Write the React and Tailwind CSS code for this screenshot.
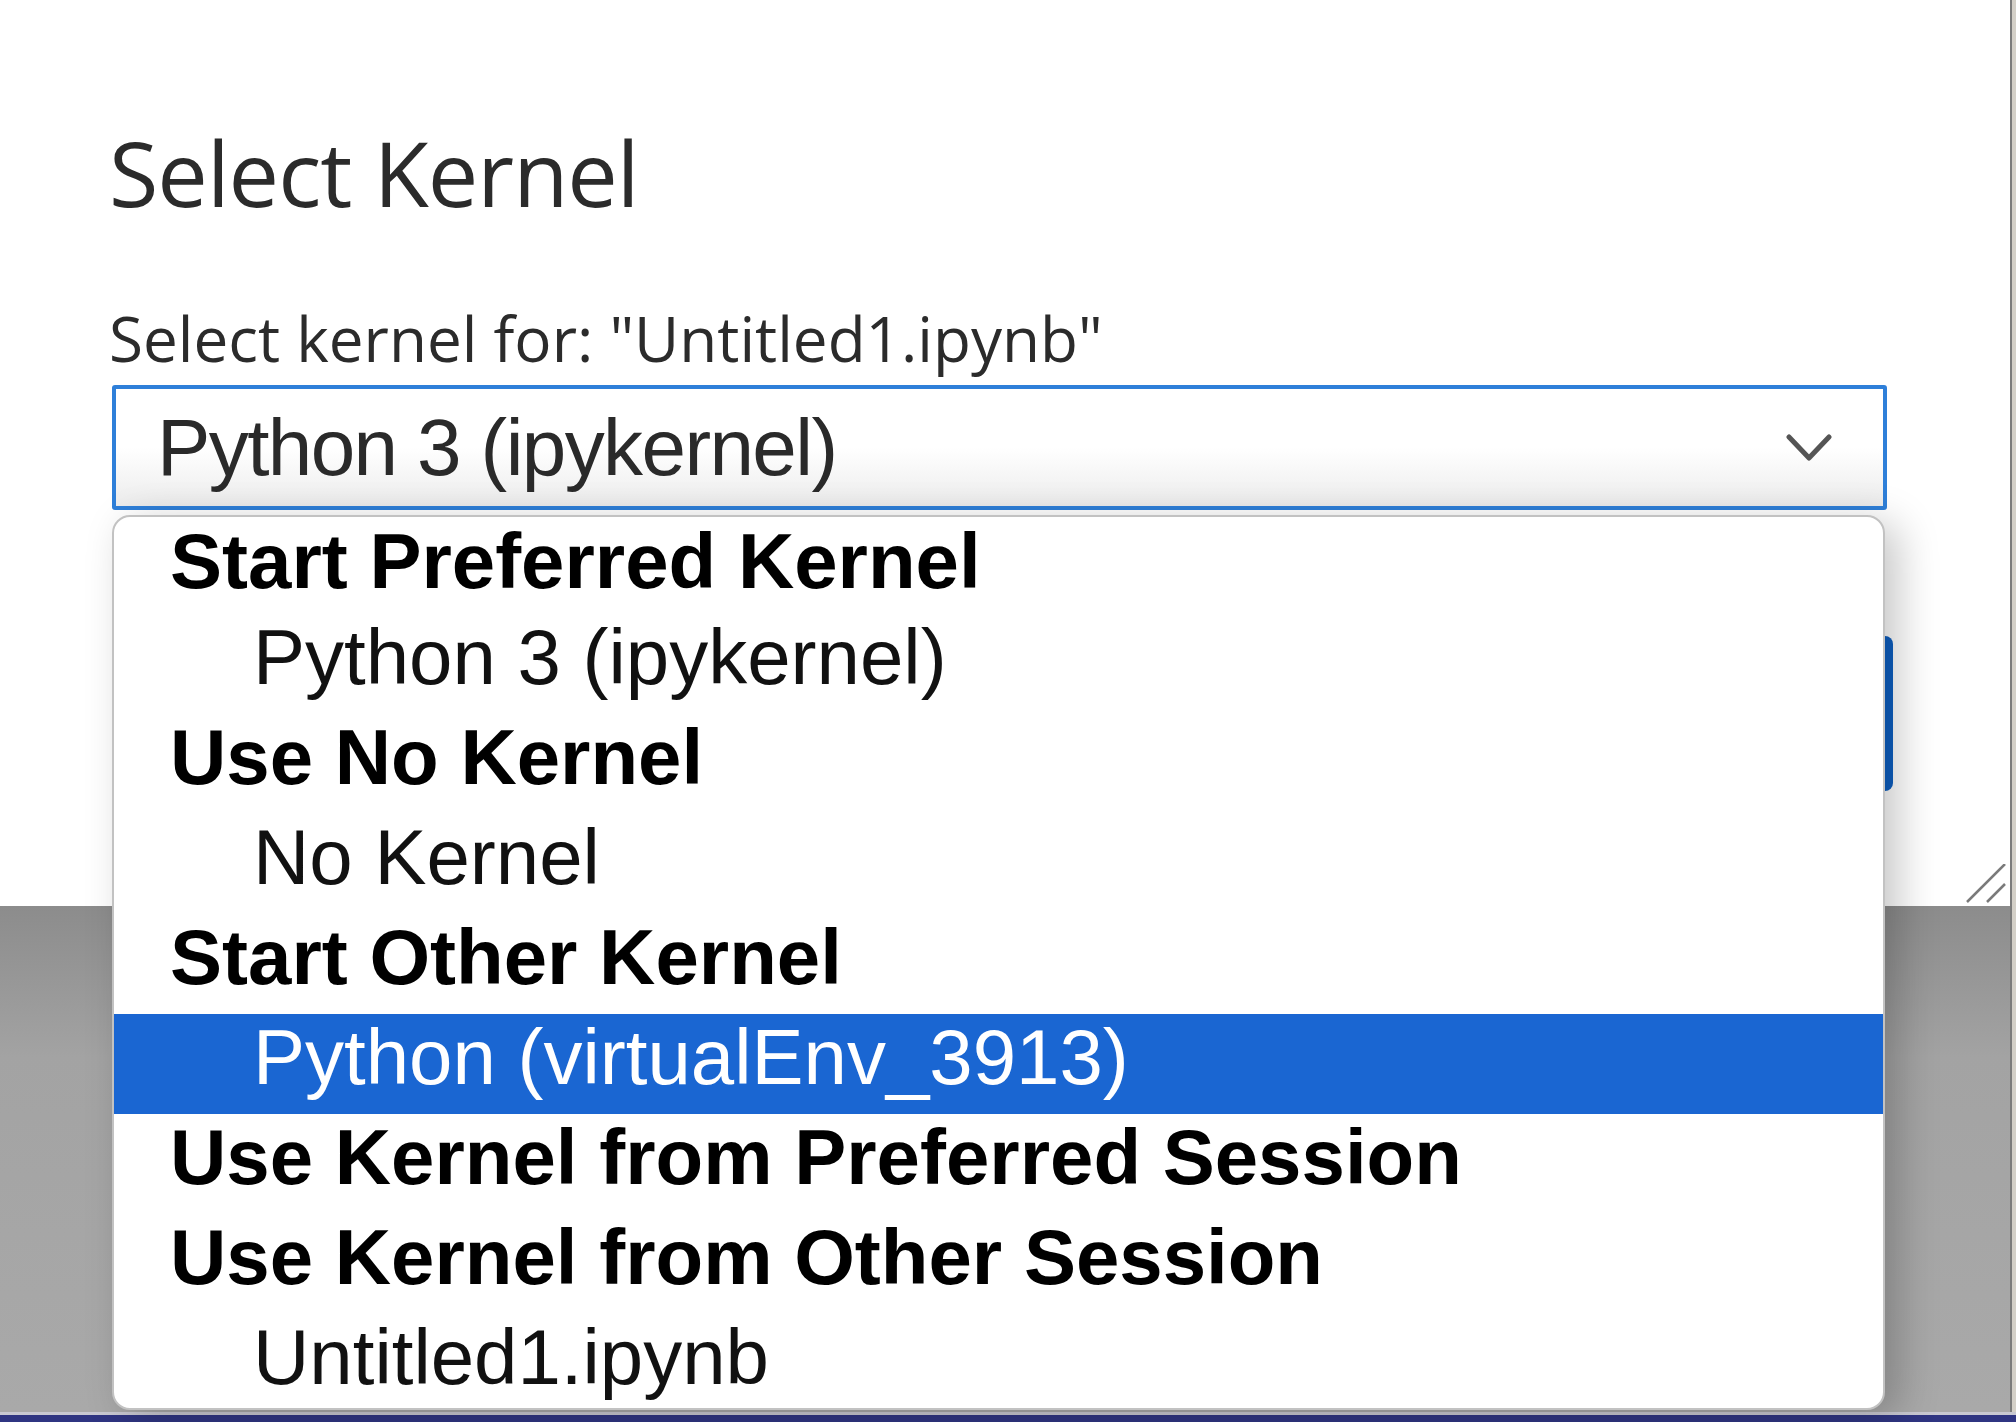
import React from 'react';

const rows = [
    { label: 'Start Preferred Kernel', group: true, first: true },
    { label: 'Python 3 (ipykernel)' },
    { label: 'Use No Kernel', group: true },
    { label: 'No Kernel' },
    { label: 'Start Other Kernel', group: true },
    { label: 'Python (virtualEnv_3913)', selected: true },
    { label: 'Use Kernel from Preferred Session', group: true },
    { label: 'Use Kernel from Other Session', group: true },
    { label: 'Untitled1.ipynb' },
];

const Chevron = () => (
    <svg width="46" height="30" viewBox="0 0 46 30" fill="none">
        <polyline points="3,4 23,25 43,4" stroke="#555" strokeWidth="5" strokeLinecap="round" strokeLinejoin="round" />
    </svg>
);

const Grip = () => (
    <svg width="40" height="40" viewBox="0 0 40 40" className="absolute right-[4px] bottom-[2px]">
        <line x1="1" y1="38" x2="39" y2="0" stroke="#7a7a7a" strokeWidth="2.5" />
        <line x1="21" y1="38" x2="39" y2="20" stroke="#7a7a7a" strokeWidth="2.5" />
    </svg>
);

const KernelList = () => (
    <div className="absolute left-[112px] top-[515px] w-[1773px] h-[895px] rounded-[18px] border-2 border-[#c2c2c2] bg-white overflow-hidden shadow-[14px_8px_40px_rgba(0,0,0,0.22)] font-['Liberation_Sans',Arial,sans-serif]">
        {rows.map((r) => (
            <div
                key={r.label}
                className={
                    'text-[78px] whitespace-nowrap ' +
                    (r.first ? 'h-[97px] leading-[88px] ' : 'h-[100px] leading-[86px] ') +
                    (r.group ? 'pl-[56px] font-bold text-black ' : 'pl-[139px] ') +
                    (r.selected ? 'bg-[#1a66d2] text-white' : 'text-[#111]')
                }
            >
                {r.label}
            </div>
        ))}
    </div>
);

export default function App() {
    return (
        <div className="relative w-[2016px] h-[1422px] overflow-hidden flex flex-col bg-[#2f3582]">
            <div className="flex h-[1412px]">
                <div className="w-[2010px] flex flex-col">
                    <section className="relative h-[906px] bg-white pl-[109px] pr-[117px] font-['Open_Sans','Noto_Sans',sans-serif] text-[#2b2b2b]">
                        <h1 className="pt-[127px] text-[90px] leading-none font-normal tracking-[-1px]">Select Kernel</h1>
                        <p className="mt-[90px] text-[62px] leading-none">Select kernel for: "Untitled1.ipynb"</p>
                        <div className="mt-[16px] ml-[3px] w-[1775px] h-[125px] flex items-center justify-between pl-[41px] pr-[51px] border-4 border-[#2e7fd9] rounded-[3px] bg-linear-to-b from-white via-white to-[#ececec]">
                            <span className="text-[80px] leading-[100px] tracking-[-1.6px] text-[#2a2a2a] font-['Liberation_Sans',Arial,sans-serif]">
                                Python 3 (ipykernel)
                            </span>
                            <Chevron />
                        </div>
                        <div className="mt-[126px] flex justify-end gap-[30px]">
                            <button className="w-[300px] h-[155px] rounded-[8px] border-2 border-[#999] bg-white text-[60px]">Cancel</button>
                            <button className="w-[300px] h-[155px] rounded-[8px] bg-[#0d5fc2] text-white text-[60px]">Select</button>
                        </div>
                        <Grip />
                    </section>
                    <div className="flex-1 bg-linear-to-b from-[#8c8c8c] via-[#a3a3a3] via-30% to-[#a9a9a9]" />
                </div>
                <div className="w-[2px] bg-[#7c7c7c]" />
                <div className="flex-1 bg-[#d4d0c8]" />
            </div>
            <div className="h-[3px] bg-[#c9c9d2]" />
            <KernelList />
        </div>
    );
}
